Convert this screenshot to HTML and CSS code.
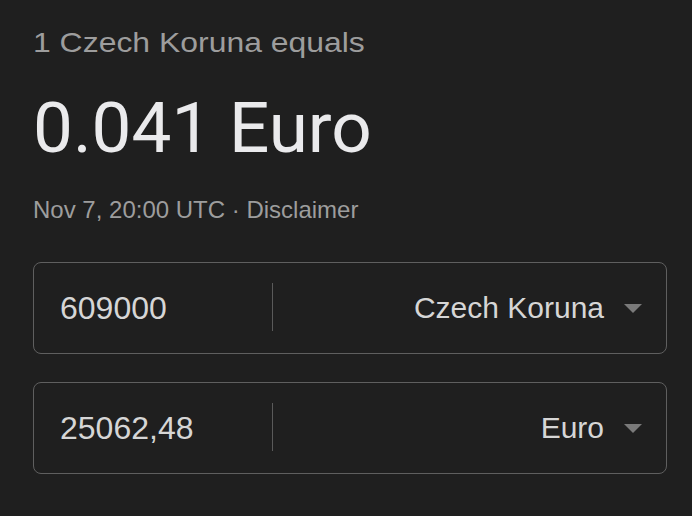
FILE: index.html
```html
<!DOCTYPE html>
<html lang="en">
<head>
<meta charset="utf-8">
<title>Currency converter</title>
<link rel="stylesheet" href="styles.css">
</head>
<body>
<main class="card">
  <div class="label"><span class="label-text">1 Czech Koruna equals</span></div>
  <div class="value">0.041 Euro</div>
  <div class="meta">Nov 7, 20:00 UTC · Disclaimer</div>
  <div class="field">
    <div class="amount">609000</div>
    <div class="divider"></div>
    <div class="currency">
      <span class="currency-name">Czech Koruna</span>
      <span class="caret"></span>
    </div>
  </div>
  <div class="field">
    <div class="amount">25062,48</div>
    <div class="divider"></div>
    <div class="currency">
      <span class="currency-name">Euro</span>
      <span class="caret"></span>
    </div>
  </div>
</main>
</body>
</html>
```

FILE: styles.css
```css
html, body {
  margin: 0;
  padding: 0;
  background: #1f1f1f;
}

body {
  width: 692px;
  height: 516px;
  overflow: hidden;
  font-family: "Liberation Sans", Arial, sans-serif;
}

.card {
  padding: 27px 25px 0 33px;
}

.label {
  font-size: 28px;
  line-height: 32px;
  color: #9d9d9d;
}

.label-text {
  display: inline-block;
  transform: scaleX(1.14);
  transform-origin: left center;
}

.value {
  margin-top: 29px;
  font-family: Roboto, "Liberation Sans", sans-serif;
  font-size: 71px;
  line-height: 80px;
  color: #eaeaec;
}

.meta {
  margin-top: 28px;
  font-size: 24px;
  line-height: 28px;
  color: #9d9d9d;
}

.field {
  display: flex;
  align-items: center;
  box-sizing: border-box;
  height: 92px;
  border: 1px solid #5f5f5f;
  border-radius: 8px;
  margin-top: 38px;
}

.field + .field {
  margin-top: 28px;
}

.amount {
  width: 238px;
  box-sizing: border-box;
  padding-left: 26px;
  font-size: 32px;
  color: #d6d6d6;
}

.divider {
  width: 1px;
  height: 48px;
  margin-top: -2px;
  background: #5a5a5a;
}

.currency {
  flex: 1;
  display: flex;
  align-items: center;
  justify-content: flex-end;
  padding-right: 24px;
  font-size: 30px;
  color: #d6d6d6;
}

.caret {
  width: 0;
  height: 0;
  margin-left: 20px;
  border-left: 9px solid transparent;
  border-right: 9px solid transparent;
  border-top: 9px solid #7a7a7a;
}
```
